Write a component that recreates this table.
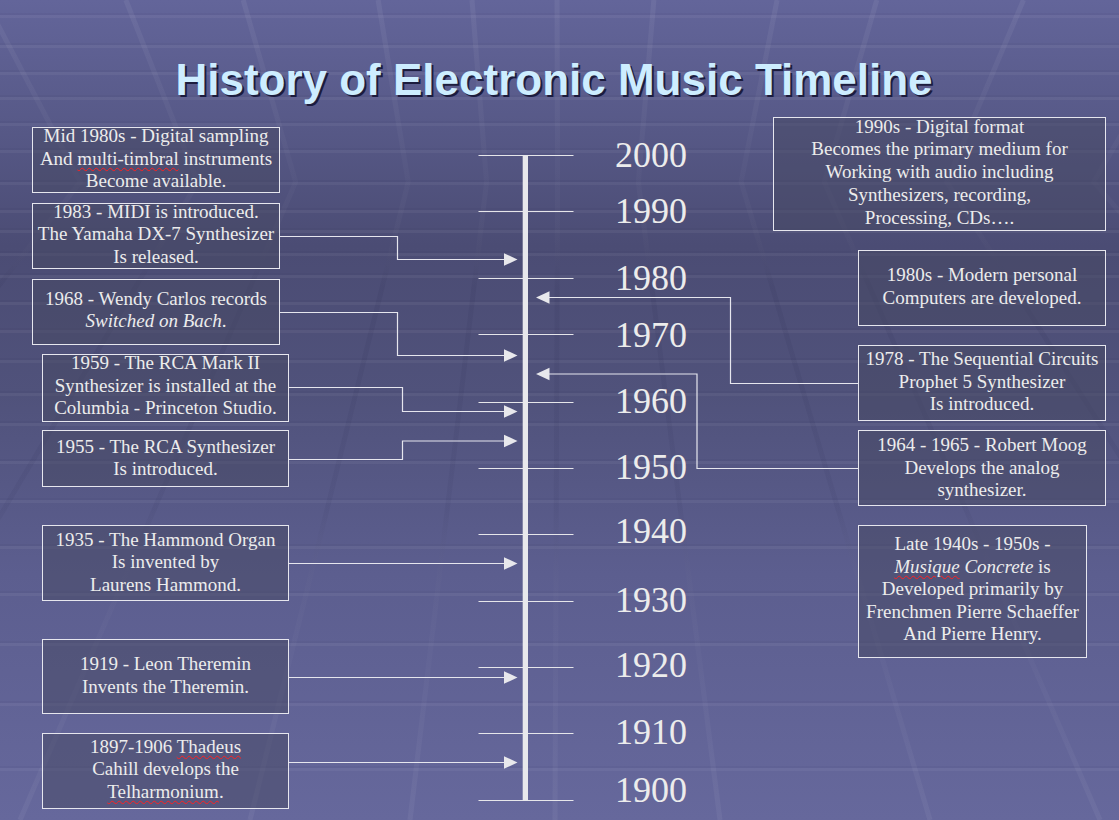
import React from "react";

const STRIPES = [15, 45, 72, 97, 123, 150, 182, 210, 230, 253, 275, 302, 330, 360, 393, 423, 461, 500, 546, 593, 643, 703, 768];
const BOTTOM_X = [-420, -180, 20, 250, 410, 555, 720, 930, 1100, 1350, 1650];

function kinkPath(xb) {
  const xk = 560 + (xb - 560) * (612 / 1250);
  const xt = 560 + (xk - 560) * (1100 / 918);
  return `M ${xt} 0 L ${xk} 182 L ${xb} 820`;
}

function Background() {
  return (
    <svg className="absolute inset-0" width="1119" height="820" viewBox="0 0 1119 820">
      <defs>
        <linearGradient id="bg" x1="0" y1="0" x2="0" y2="1">
          <stop offset="0" stopColor="#63659a" />
          <stop offset="0.14" stopColor="#585a89" />
          <stop offset="0.3" stopColor="#4b4c74" />
          <stop offset="0.48" stopColor="#50527b" />
          <stop offset="0.7" stopColor="#5c5e8f" />
          <stop offset="1" stopColor="#66689c" />
        </linearGradient>
        <linearGradient id="ln" gradientUnits="userSpaceOnUse" x1="0" y1="0" x2="0" y2="820">
          <stop offset="0" stopColor="#ffffff" stopOpacity="0.06" />
          <stop offset="0.22" stopColor="#ffffff" stopOpacity="0.02" />
          <stop offset="0.35" stopColor="#1a1a40" stopOpacity="0.08" />
          <stop offset="0.62" stopColor="#1a1a40" stopOpacity="0.06" />
          <stop offset="0.8" stopColor="#ffffff" stopOpacity="0.02" />
          <stop offset="1" stopColor="#ffffff" stopOpacity="0.05" />
        </linearGradient>
      </defs>
      <rect x="0" y="0" width="1119" height="820" fill="url(#bg)" />
      {STRIPES.map((y) => (
        <g key={y}>
          <rect x="0" y={y} width="1119" height="3" fill="#ffffff" fillOpacity="0.05" />
          <rect x="0" y={y - 2} width="1119" height="2" fill="#20204a" fillOpacity="0.05" />
        </g>
      ))}
      {BOTTOM_X.map((xb) => (
        <path key={xb} d={kinkPath(xb)} fill="none" stroke="url(#ln)" strokeWidth="5" />
      ))}
    </svg>
  );
}

const TICKS = [155.5, 211.5, 278.5, 334.5, 402.5, 468.5, 534.5, 601.5, 667.5, 733.5, 800.5];

function ArrowR({ y }) {
  return <polygon points={`504,${y - 6.3} 517.5,${y} 504,${y + 6.3}`} fill="#e8e8ec" />;
}
function ArrowL({ y }) {
  return <polygon points={`549.5,${y - 6.3} 536,${y} 549.5,${y + 6.3}`} fill="#e8e8ec" />;
}

function Diagram() {
  const s = { fill: "none", stroke: "#e6e6ee", strokeWidth: 1.2 };
  return (
    <svg className="absolute inset-0" width="1119" height="820" viewBox="0 0 1119 820">
      {TICKS.map((y) => (
        <line key={y} x1="478.5" y1={y} x2="573.5" y2={y} stroke="#e6e6ea" strokeWidth="1.2" />
      ))}
      <rect x="522.7" y="155" width="5.3" height="646" fill="#e8e8ec" />
      <polyline {...s} points="280,236.5 397.5,236.5 397.5,259.5 505,259.5" />
      <ArrowR y={259.5} />
      <polyline {...s} points="280,312.5 397.5,312.5 397.5,355.5 505,355.5" />
      <ArrowR y={355.5} />
      <polyline {...s} points="289,387.5 402.5,387.5 402.5,411.5 505,411.5" />
      <ArrowR y={411.5} />
      <polyline {...s} points="289,459.5 402.5,459.5 402.5,441 505,441" />
      <ArrowR y={441} />
      <polyline {...s} points="289,563.5 505,563.5" />
      <ArrowR y={563.5} />
      <polyline {...s} points="289,677.5 505,677.5" />
      <ArrowR y={677.5} />
      <polyline {...s} points="289,762.5 505,762.5" />
      <ArrowR y={762.5} />
      <polyline {...s} points="858,383.5 730.5,383.5 730.5,297.5 548,297.5" />
      <ArrowL y={297.5} />
      <polyline {...s} points="858,468.5 697,468.5 697,374 548,374" />
      <ArrowL y={374} />
    </svg>
  );
}

const boxBase =
  "absolute flex flex-col items-center border border-[#e6e6ee] bg-[#464861]/50 text-center text-[#ececec] text-[19px] leading-[22.5px] whitespace-nowrap";

const spell = "underline decoration-wavy decoration-[#ff2020] decoration-1 underline-offset-[2px]";

function L({ children }) {
  return <div>{children}</div>;
}

const yearBase = "absolute left-[590px] w-[97px] text-right text-[36px] leading-[36px] text-[#ececec]";

export default function App() {
  return (
    <div
      className="relative w-[1119px] h-[820px] overflow-hidden"
      style={{ fontFamily: '"Liberation Serif", "Times New Roman", serif' }}
    >
      <Background />
      <Diagram />

      <h1
        className="relative pt-[58px] pr-[11px] text-center text-[44px] leading-[44px] font-bold text-[#cdedff] [text-shadow:2px_2px_0px_#1c1c3e]"
        style={{ fontFamily: '"Liberation Sans", Arial, sans-serif' }}
      >
        History of Electronic Music Timeline
      </h1>

      {/* Year labels */}
      <div className={`${yearBase} top-[137px]`}>2000</div>
      <div className={`${yearBase} top-[193px]`}>1990</div>
      <div className={`${yearBase} top-[260px]`}>1980</div>
      <div className={`${yearBase} top-[317px]`}>1970</div>
      <div className={`${yearBase} top-[383px]`}>1960</div>
      <div className={`${yearBase} top-[449px]`}>1950</div>
      <div className={`${yearBase} top-[513px]`}>1940</div>
      <div className={`${yearBase} top-[582px]`}>1930</div>
      <div className={`${yearBase} top-[647px]`}>1920</div>
      <div className={`${yearBase} top-[714px]`}>1910</div>
      <div className={`${yearBase} top-[772px]`}>1900</div>

      {/* Left boxes */}
      <div className={`${boxBase} left-[32px] top-[127px] w-[248px] h-[66px]`}>
        <div className="-mt-[3px]">
          <L>Mid 1980s - Digital sampling</L>
          <L>
            And <span className={spell}>multi-timbral</span> instruments
          </L>
          <L>Become available.</L>
        </div>
      </div>

      <div className={`${boxBase} left-[32px] top-[203px] w-[248px] h-[66px]`}>
        <div className="-mt-[3.5px]">
          <L>1983 - MIDI is introduced.</L>
          <L>The Yamaha DX-7 Synthesizer</L>
          <L>Is released.</L>
        </div>
      </div>

      <div className={`${boxBase} left-[32px] top-[279px] w-[248px] h-[66px]`}>
        <div className="mt-[7.5px]">
          <L>1968 - Wendy Carlos records</L>
          <L>
            <i>Switched on Bach</i>.
          </L>
        </div>
      </div>

      <div className={`${boxBase} left-[42px] top-[354px] w-[247px] h-[68px]`}>
        <div className="-mt-[3px]">
          <L>1959 - The RCA Mark II</L>
          <L>Synthesizer is installed at the</L>
          <L>Columbia - Princeton Studio.</L>
        </div>
      </div>

      <div className={`${boxBase} left-[42px] top-[430px] w-[247px] h-[57px]`}>
        <div className="mt-[4.5px]">
          <L>1955 - The RCA Synthesizer</L>
          <L>Is introduced.</L>
        </div>
      </div>

      <div className={`${boxBase} left-[42px] top-[525px] w-[247px] h-[76px]`}>
        <div className="mt-[2.5px]">
          <L>1935 - The Hammond Organ</L>
          <L>Is invented by</L>
          <L>Laurens Hammond.</L>
        </div>
      </div>

      <div className={`${boxBase} left-[42px] top-[639px] w-[247px] h-[75px]`}>
        <div className="mt-[13px]">
          <L>1919 - Leon Theremin</L>
          <L>Invents the Theremin.</L>
        </div>
      </div>

      <div className={`${boxBase} left-[42px] top-[733px] w-[247px] h-[76px]`}>
        <div className="mt-[1.5px]">
          <L>
            1897-1906 <span className={spell}>Thadeus</span>
          </L>
          <L>Cahill develops the</L>
          <L>
            <span className={spell}>Telharmonium</span>.
          </L>
        </div>
      </div>

      {/* Right boxes */}
      <div className={`${boxBase} left-[773px] top-[117px] w-[333px] h-[114px]`}>
        <div className="-mt-[2.5px] leading-[22.9px]">
          <L>1990s - Digital format</L>
          <L>Becomes the primary medium for</L>
          <L>Working with audio including</L>
          <L>Synthesizers, recording,</L>
          <L>Processing, CDs….</L>
        </div>
      </div>

      <div className={`${boxBase} left-[858px] top-[250px] w-[248px] h-[76px]`}>
        <div className="mt-[13px]">
          <L>1980s - Modern personal</L>
          <L>Computers are developed.</L>
        </div>
      </div>

      <div className={`${boxBase} left-[858px] top-[345px] w-[248px] h-[76px]`}>
        <div className="mt-[2px]">
          <L>1978 - The Sequential Circuits</L>
          <L>Prophet 5 Synthesizer</L>
          <L>Is introduced.</L>
        </div>
      </div>

      <div className={`${boxBase} left-[858px] top-[430px] w-[248px] h-[76px]`}>
        <div className="mt-[3px]">
          <L>1964 - 1965 - Robert Moog</L>
          <L>Develops the analog</L>
          <L>synthesizer.</L>
        </div>
      </div>

      <div className={`${boxBase} left-[858px] top-[525px] w-[229px] h-[133px]`}>
        <div className="mt-[7px]">
          <L>Late 1940s - 1950s -</L>
          <L>
            <i>
              <span className={spell}>Musique</span> Concrete
            </i>{" "}
            is
          </L>
          <L>Developed primarily by</L>
          <L>Frenchmen Pierre Schaeffer</L>
          <L>And Pierre Henry.</L>
        </div>
      </div>
    </div>
  );
}
